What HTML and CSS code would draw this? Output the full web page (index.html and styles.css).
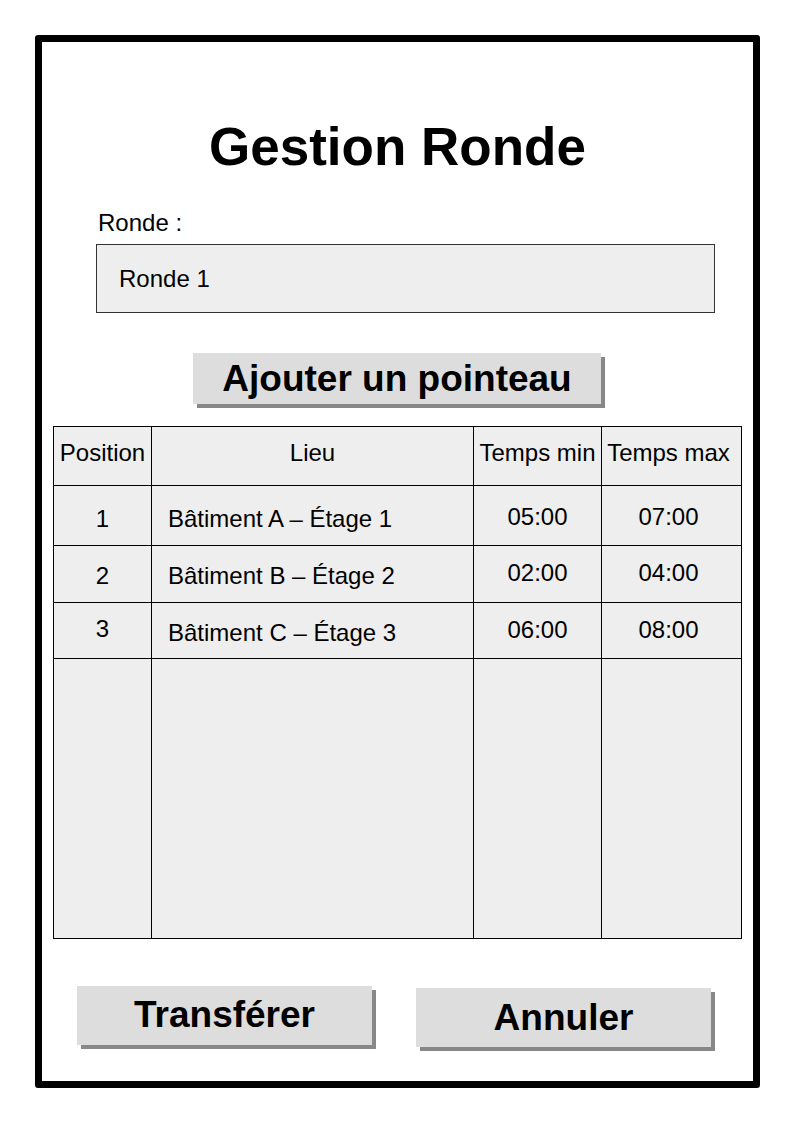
FILE: index.html
```html
<!DOCTYPE html>
<html lang="fr">
<head>
<meta charset="utf-8">
<title>Gestion Ronde</title>
<link rel="stylesheet" href="styles.css">
</head>
<body>
<div class="frame">
  <h1 class="title">Gestion Ronde</h1>
  <label class="label">Ronde :</label>
  <div class="input">Ronde 1</div>
  <div class="add-wrap"><div class="btn btn-add">Ajouter un pointeau</div></div>
  <table class="grid">
    <colgroup>
      <col class="c-pos"><col class="c-lieu"><col class="c-min"><col class="c-max">
    </colgroup>
    <tr class="r-head">
      <th>Position</th><th>Lieu</th><th>Temps min</th><th class="max">Temps max</th>
    </tr>
    <tr class="r1">
      <td class="pos">1</td><td class="lieu">Bâtiment A – Étage 1</td><td class="t">05:00</td><td class="t max">07:00</td>
    </tr>
    <tr class="r2">
      <td class="pos">2</td><td class="lieu">Bâtiment B – Étage 2</td><td class="t">02:00</td><td class="t max">04:00</td>
    </tr>
    <tr class="r3">
      <td class="pos">3</td><td class="lieu">Bâtiment C – Étage 3</td><td class="t">06:00</td><td class="t max">08:00</td>
    </tr>
    <tr class="r-empty">
      <td></td><td></td><td></td><td></td>
    </tr>
  </table>
  <div class="actions">
    <div class="btn btn-transfer">Transférer</div>
    <div class="btn btn-cancel">Annuler</div>
  </div>
</div>
</body>
</html>
```
FILE: styles.css
```css
html, body {
  margin: 0;
  padding: 0;
  background: #ffffff;
}
body {
  font-family: "Liberation Sans", Arial, sans-serif;
  color: #000;
}
.frame {
  box-sizing: border-box;
  margin: 35px 0 0 35px;
  width: 725px;
  height: 1053px;
  border: 7px solid #000;
  border-radius: 3px;
  background: #fff;
  padding-top: 75px;
}
.title {
  margin: 0;
  font-size: 53px;
  line-height: 60px;
  font-weight: bold;
  text-align: center;
}
.label {
  display: block;
  margin: 33px 0 0 56px;
  font-size: 24px;
  line-height: 26px;
}
.input {
  box-sizing: border-box;
  margin: 8px 0 0 54px;
  width: 619px;
  height: 69px;
  border: 1px solid #333;
  background: #eeeeee;
  padding-left: 22px;
  display: flex;
  align-items: center;
  font-size: 24px;
}
.add-wrap {
  display: flex;
  justify-content: center;
  margin-top: 40px;
}
.btn {
  box-sizing: border-box;
  background: #dddddd;
  box-shadow: 4px 4px 0 #888888;
  font-weight: bold;
  display: flex;
  align-items: center;
  justify-content: center;
}
.btn-add {
  width: 408px;
  height: 51px;
  font-size: 37px;
  margin-right: 1px;
}
.grid {
  margin: 22px 0 0 11px;
  width: 688px;
  border-collapse: collapse;
  table-layout: fixed;
  background: #eeeeee;
  font-size: 24px;
}
.c-pos { width: 98px; }
.c-lieu { width: 322px; }
.c-min { width: 128px; }
.c-max { width: 140px; }
.grid th, .grid td {
  border: 1px solid #000;
  padding: 0;
  text-align: center;
  font-weight: normal;
  vertical-align: middle;
}
.grid .max {
  padding-right: 6px;
}
.grid td.lieu {
  text-align: left;
  padding-left: 16px;
}
.r-head { height: 59px; }
.r-head th { padding-bottom: 7px; }
.r1 { height: 60px; }
.r1 .pos, .r1 .lieu { padding-top: 6px; }
.r1 .t { padding-top: 2px; }
.r2 { height: 57px; }
.r2 .pos, .r2 .lieu { padding-top: 4px; }
.r2 .t { padding-bottom: 2px; }
.r3 { height: 56px; }
.r3 .pos { padding-bottom: 4px; }
.r3 .lieu { padding-top: 4px; }
.r3 .t { padding-bottom: 2px; }
.r-empty { height: 280px; }
.actions {
  display: flex;
  align-items: flex-start;
  gap: 44px;
  margin: 47px 0 0 35px;
}
.btn-transfer {
  width: 295px;
  height: 59px;
  font-size: 37px;
  padding-bottom: 2px;
}
.btn-cancel {
  width: 295px;
  height: 59px;
  font-size: 37px;
  margin-top: 2px;
}
```
